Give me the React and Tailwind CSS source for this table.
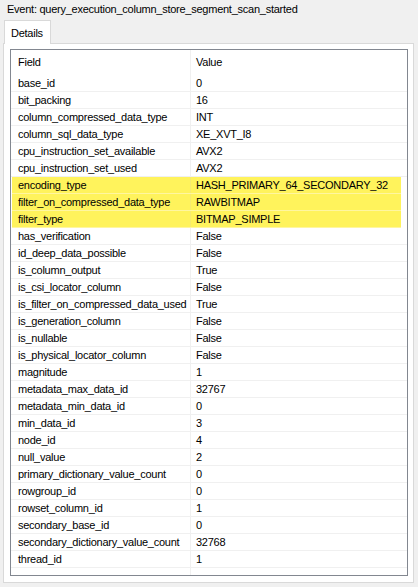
const rows = [
  ['base_id', '0'],
  ['bit_packing', '16'],
  ['column_compressed_data_type', 'INT'],
  ['column_sql_data_type', 'XE_XVT_I8'],
  ['cpu_instruction_set_available', 'AVX2'],
  ['cpu_instruction_set_used', 'AVX2'],
  ['encoding_type', 'HASH_PRIMARY_64_SECONDARY_32', true],
  ['filter_on_compressed_data_type', 'RAWBITMAP', true],
  ['filter_type', 'BITMAP_SIMPLE', true],
  ['has_verification', 'False'],
  ['id_deep_data_possible', 'False'],
  ['is_column_output', 'True'],
  ['is_csi_locator_column', 'False'],
  ['is_filter_on_compressed_data_used', 'True'],
  ['is_generation_column', 'False'],
  ['is_nullable', 'False'],
  ['is_physical_locator_column', 'False'],
  ['magnitude', '1'],
  ['metadata_max_data_id', '32767'],
  ['metadata_min_data_id', '0'],
  ['min_data_id', '3'],
  ['node_id', '4'],
  ['null_value', '2'],
  ['primary_dictionary_value_count', '0'],
  ['rowgroup_id', '0'],
  ['rowset_column_id', '1'],
  ['secondary_base_id', '0'],
  ['secondary_dictionary_value_count', '32768'],
  ['thread_id', '1'],
]

function Row({ field, value, hl }) {
  return (
    <div className={`flex h-[17px] border-b ${hl ? 'border-[#fff6a0] bg-[#fff35c] ml-[1px] mr-[6px]' : 'border-[#f0f0f0]'}`}>
      <div className={`shrink-0 border-r ${hl ? 'w-[179px] pl-[6px] border-[#f6ea70]' : 'w-[180px] pl-[7px] border-[#f0f0f0]'} leading-[16px] whitespace-nowrap overflow-hidden`}>
        {field}
      </div>
      <div className="pl-[5px] leading-[16px] whitespace-nowrap">{value}</div>
    </div>
  )
}

export default function App() {
  return (
    <div className="w-[418px] h-[587px] bg-[#f0f0f0] text-black text-[11px] tracking-[-0.25px] overflow-hidden" style={{ fontFamily: '"Liberation Sans", Arial, sans-serif' }}>
      <div className="h-[20px] pl-[7px] leading-[19px]">Event: query_execution_column_store_segment_scan_started</div>

      <div className="pl-[4px] flex">
        <div className="w-[47px] h-[24px] bg-white border border-b-0 border-[#d9d9d9] pl-[6px] leading-[24px] -mb-[1px] relative z-10">Details</div>
      </div>

      <div className="ml-[3px] w-[411px] h-[540px] bg-white border border-[#d9d9d9] pt-[5px] pl-[6px]">
        <div className="w-[398px] h-[527px] border border-[#828790] overflow-hidden">
          <div className="flex h-[25px]">
            <div className="w-[180px] shrink-0 border-r border-[#f0f0f0] pl-[7px] leading-[25px]">Field</div>
            <div className="pl-[5px] leading-[25px]">Value</div>
          </div>
          {rows.map(([f, v, hl]) => (
            <Row key={f} field={f} value={v} hl={hl} />
          ))}
          <div className="flex h-[17px]">
            <div className="w-[180px] shrink-0 border-r border-[#f0f0f0]"></div>
          </div>
        </div>
      </div>
    </div>
  )
}
